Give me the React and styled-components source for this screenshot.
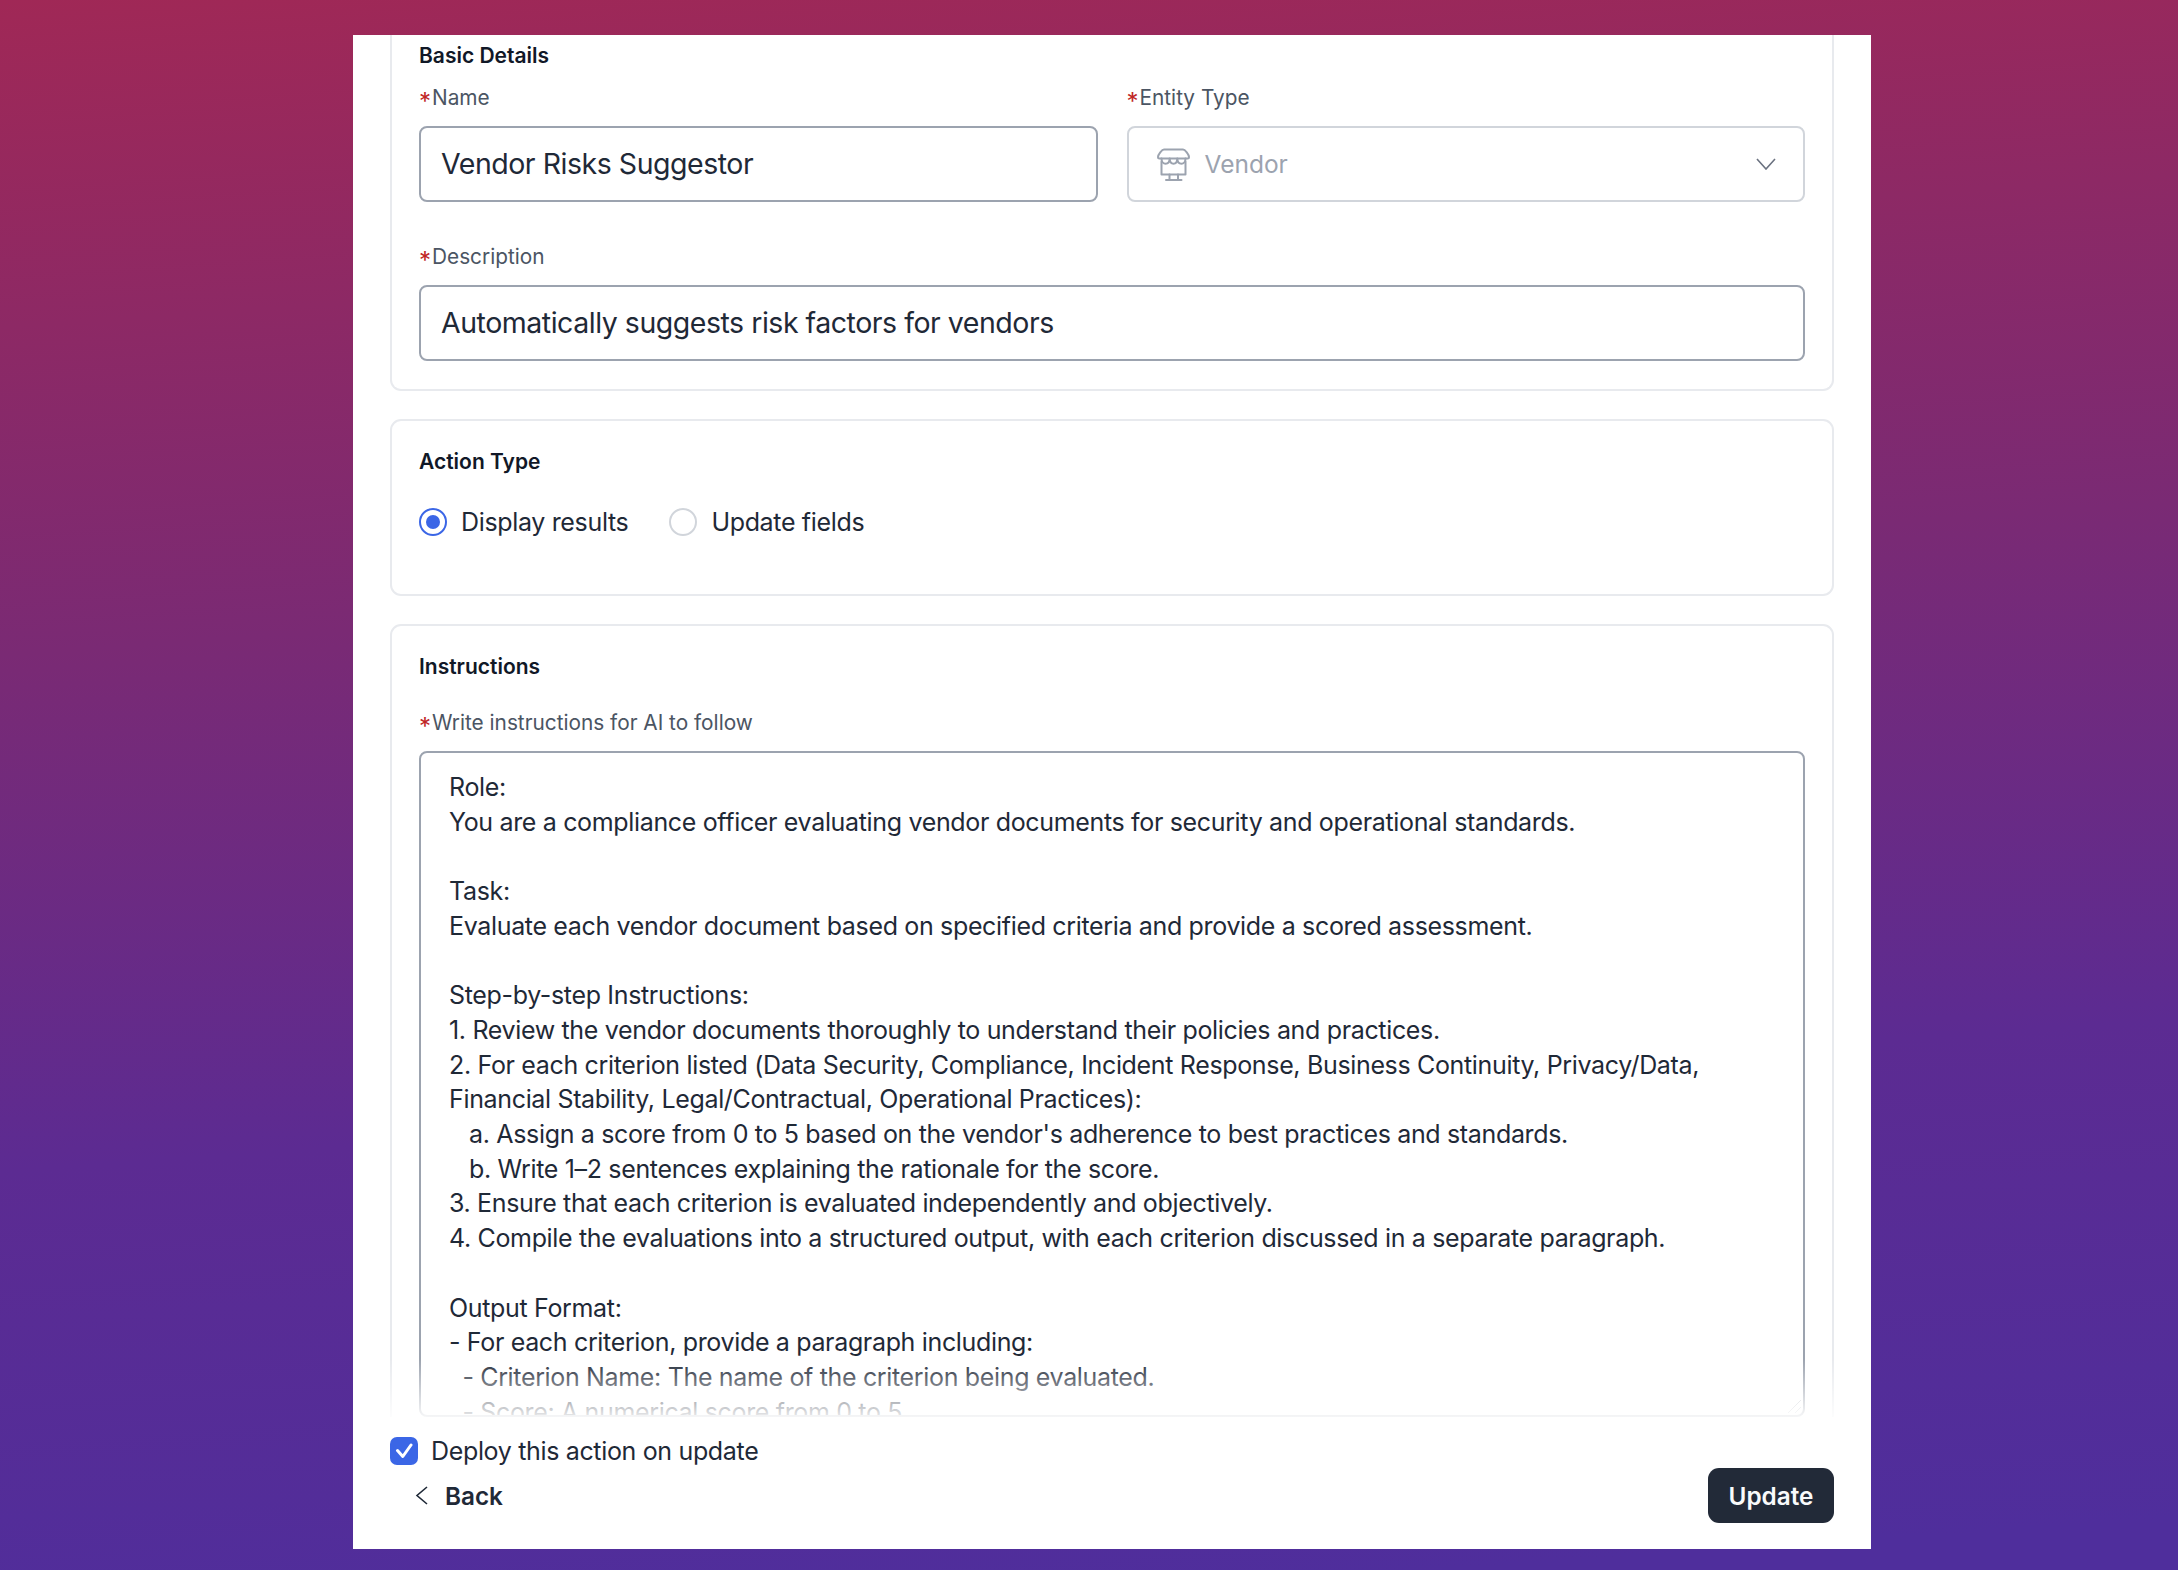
import styled, { createGlobalStyle } from 'styled-components';

const instructions = `Role:
You are a compliance officer evaluating vendor documents for security and operational standards.

Task:
Evaluate each vendor document based on specified criteria and provide a scored assessment.

Step-by-step Instructions:
1. Review the vendor documents thoroughly to understand their policies and practices.
2. For each criterion listed (Data Security, Compliance, Incident Response, Business Continuity, Privacy/Data,
Financial Stability, Legal/Contractual, Operational Practices):
   a. Assign a score from 0 to 5 based on the vendor's adherence to best practices and standards.
   b. Write 1–2 sentences explaining the rationale for the score.
3. Ensure that each criterion is evaluated independently and objectively.
4. Compile the evaluations into a structured output, with each criterion discussed in a separate paragraph.

Output Format:
- For each criterion, provide a paragraph including:
  - Criterion Name: The name of the criterion being evaluated.
  - Score: A numerical score from 0 to 5.`;

const GlobalStyle = createGlobalStyle`
  html, body {
    margin: 0;
    padding: 0;
  }

  body {
    font-family: Inter, "Liberation Sans", sans-serif;
    color: #1f2937;
  }

  * {
    box-sizing: border-box;
  }
`;

const Page = styled.div`
  width: 2178px;
  height: 1570px;
  padding: 35px 307px 21px 353px;
  background: linear-gradient(176deg, #a02856 0%, #7a2a74 38%, #5c2b92 68%, #4f2e9c 97%);
  overflow: hidden;
`;

const Modal = styled.div`
  height: 100%;
  padding: 0 37px 26px 37px;
  display: flex;
  flex-direction: column;
  background: #fff;
`;

const Scroller = styled.div`
  position: relative;
  height: 1382px;
  flex: none;
  display: flex;
  flex-direction: column;
  gap: 28px;
  overflow: hidden;
`;

const Fade = styled.div`
  position: absolute;
  left: 0;
  right: 0;
  bottom: 0;
  height: 58px;
  background: linear-gradient(to bottom, rgba(255, 255, 255, 0), rgba(255, 255, 255, 0.9));
  pointer-events: none;
`;

const Card = styled.section`
  flex: none;
  height: ${(p) => p.$height}px;
  padding: ${(p) => p.$top}px 27px 0;
  border: 2px solid #e8eaee;
  border-top: ${(p) => (p.$cut ? 'none' : '2px solid #e8eaee')};
  border-radius: ${(p) => (p.$cut ? '0 0 11px 11px' : '11px')};
`;

const CardTitle = styled.h3`
  margin: 0 0 ${(p) => p.$gap}px;
  font-size: 21px;
  line-height: 28px;
  font-weight: 600;
  color: #111827;
`;

const FieldGrid = styled.div`
  display: grid;
  grid-template-columns: 1fr 1fr;
  column-gap: 29px;
`;

const Field = styled.div`
  display: flex;
  flex-direction: column;
  margin-bottom: ${(p) => p.$gap || 0}px;
`;

const Label = styled.label`
  height: 29px;
  margin-bottom: 14px;
  font-size: 20.8px;
  line-height: 29px;
  color: #4b5563;

  &::before {
    content: '*';
    display: inline-block;
    width: 13px;
    font-size: 24px;
    line-height: 20px;
    color: #c02626;
    transform: translateY(5px);
  }
`;

const TextBox = styled.div`
  height: 76px;
  padding: 0 20px 2px;
  display: flex;
  align-items: center;
  border: 2px solid #9ca3af;
  border-radius: 8px;
  font-size: 28.5px;
  letter-spacing: -0.47px;
  color: #1f2937;
`;

const SelectBox = styled(TextBox)`
  padding: 0 27px 0 28px;
  gap: 15px;
  border-color: #d1d5db;
  font-size: 24.5px;
  letter-spacing: 0;
  color: #9ca3af;
`;

const SelectValue = styled.span`
  flex: 1;
`;

const RadioRow = styled.div`
  display: flex;
  align-items: center;
  gap: 41px;
`;

const RadioOption = styled.label`
  display: flex;
  align-items: center;
  gap: 14px;
  font-size: 25px;
  letter-spacing: -0.34px;
  line-height: 28px;
  color: #1f2937;
`;

const RadioDot = styled.span`
  width: 28px;
  height: 28px;
  flex: none;
  border-radius: 50%;
  border: 2px solid ${(p) => (p.$on ? '#3b66e6' : '#d1d5db')};
  display: flex;
  align-items: center;
  justify-content: center;

  &::after {
    content: '';
    width: 14px;
    height: 14px;
    border-radius: 50%;
    background: ${(p) => (p.$on ? '#3b66e6' : 'transparent')};
  }
`;

const Editor = styled.div`
  position: relative;
  height: 666px;
  padding: 17px 27px 0 28px;
  border: 2px solid #9ca3af;
  border-radius: 8px;
  font-size: 25px;
  letter-spacing: -0.34px;
  line-height: 34.7px;
  white-space: pre;
  color: #1f2937;
  overflow: hidden;
`;

const Grip = styled.svg`
  position: absolute;
  right: 1px;
  bottom: 1px;
`;

const DeployRow = styled.label`
  flex: none;
  margin-top: 19px;
  height: 29px;
  display: flex;
  align-items: center;
  gap: 13px;
  font-size: 25px;
  letter-spacing: -0.34px;
  color: #1f2937;
`;

const CheckBox = styled.span`
  width: 28px;
  height: 28px;
  flex: none;
  border-radius: 7px;
  background: #3b66e6;
  display: flex;
  align-items: center;
  justify-content: center;
`;

const Footer = styled.div`
  flex: none;
  margin-top: 3px;
  height: 55px;
  display: flex;
  align-items: center;
  justify-content: space-between;
`;

const BackButton = styled.button`
  margin-left: 25px;
  padding: 0;
  display: flex;
  align-items: center;
  gap: 17px;
  border: none;
  background: none;
  font: 600 24.3px Inter, sans-serif;
  color: #1f2937;
`;

const UpdateButton = styled.button`
  width: 126px;
  height: 55px;
  border: none;
  border-radius: 11px;
  background: #222a38;
  font: 600 24.3px Inter, sans-serif;
  color: #f9fafb;
`;

const StoreIcon = () => (
  <svg width="33" height="33" viewBox="0 0 33 33" fill="none" stroke="#9ca3af" strokeWidth="2" strokeLinejoin="round" strokeLinecap="round">
    <path d="M7 1.500h19c2 0 6 5 6 7.500 0 1-.5 1.500-1.500 1.500h-28C1.500 10.500 1 10 1 9c0-2.500 4-7.500 6-7.500z" />
    <path d="M4.500 10.500c0 7 8 7 8.200 0 .3 7 7.400 7 7.600 0 .2 7 8.200 7 8.200 0" />
    <path d="M4.500 13.500v13h24v-13" />
    <path d="M12.500 26.500v5.500M21 26.500v5.500M9 32h15.500" />
  </svg>
);

const ChevronDown = () => (
  <svg width="20" height="12" viewBox="0 0 20 12" fill="none" stroke="#6b7280" strokeWidth="1.6">
    <path d="M1 1l9 10 9-10" />
  </svg>
);

const ChevronLeft = () => (
  <svg width="13" height="19" viewBox="0 0 13 19" fill="none" stroke="#1f2937" strokeWidth="1.6">
    <path d="M12 1L2 9.500 12 18" />
  </svg>
);

const App = () => (
  <Page>
    <GlobalStyle />
    <Modal>
      <Scroller>
        <Card $cut $height={356} $top={7}>
          <CardTitle $gap={13}>Basic Details</CardTitle>
          <FieldGrid>
            <Field $gap={40}>
              <Label>Name</Label>
              <TextBox>Vendor Risks Suggestor</TextBox>
            </Field>
            <Field $gap={40}>
              <Label>Entity Type</Label>
              <SelectBox>
                <StoreIcon />
                <SelectValue>Vendor</SelectValue>
                <ChevronDown />
              </SelectBox>
            </Field>
          </FieldGrid>
          <Field>
            <Label>Description</Label>
            <TextBox>Automatically suggests risk factors for vendors</TextBox>
          </Field>
        </Card>
        <Card $height={177} $top={27}>
          <CardTitle $gap={32}>Action Type</CardTitle>
          <RadioRow>
            <RadioOption>
              <RadioDot $on />
              Display results
            </RadioOption>
            <RadioOption>
              <RadioDot />
              Update fields
            </RadioOption>
          </RadioRow>
        </Card>
        <Card $height={850} $top={27}>
          <CardTitle $gap={27}>Instructions</CardTitle>
          <Field>
            <Label>Write instructions for AI to follow</Label>
            <Editor>
              {instructions}
              <Grip width="16" height="16" viewBox="0 0 16 16" fill="none" stroke="#c4c8cf" strokeWidth="1">
                <path d="M2 15L15 2M9 15l6-6" />
              </Grip>
            </Editor>
          </Field>
        </Card>
        <Fade />
      </Scroller>
      <DeployRow>
        <CheckBox>
          <svg width="18" height="17" viewBox="0 0 18 17" fill="none" stroke="#fff" strokeWidth="3" strokeLinecap="round" strokeLinejoin="round">
            <path d="M2.500 8.500L7.800 14.500 16 3" />
          </svg>
        </CheckBox>
        Deploy this action on update
      </DeployRow>
      <Footer>
        <BackButton>
          <ChevronLeft />
          Back
        </BackButton>
        <UpdateButton>Update</UpdateButton>
      </Footer>
    </Modal>
  </Page>
);

export default App;
